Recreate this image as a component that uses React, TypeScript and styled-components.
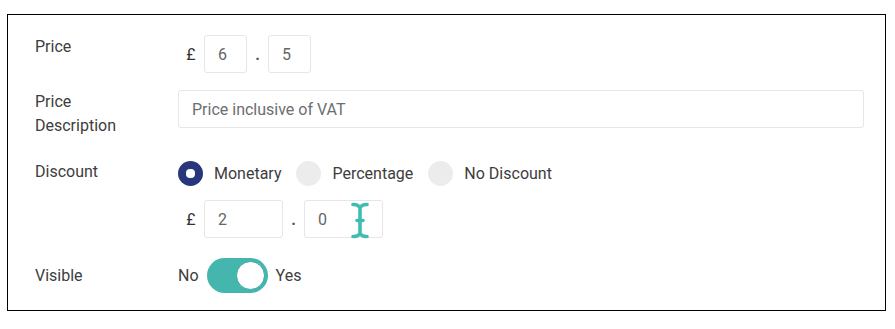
import React, { useState } from "react";
import styled, { createGlobalStyle } from "styled-components";

const GlobalStyle = createGlobalStyle`
  html, body {
    margin: 0;
    padding: 0;
    background: #ffffff;
  }
  body {
    font-family: Roboto, "Liberation Sans", Arial, sans-serif;
    color: #333333;
  }
`;

// Styled components
const Panel = styled.div`
  box-sizing: border-box;
  width: 879px;
  height: 297px;
  margin: 14px 0 0 7px;
  border: 1.5px solid #000;
  padding: 20px 22px 0 27px;
  display: flex;
  flex-direction: column;
`;

const Row = styled.div<{ $top?: number; $center?: boolean }>`
  display: grid;
  grid-template-columns: 143px 1fr;
  align-items: ${(p) => (p.$center ? "center" : "start")};
  margin-top: ${(p) => p.$top ?? 0}px;
`;

const Label = styled.div`
  font-size: 16px;
  line-height: 24px;
  color: #3d3d3d;
`;

const Controls = styled.div`
  display: flex;
  flex-direction: column;
  gap: 14px;
`;

const Inline = styled.div`
  display: flex;
  align-items: center;
`;

const Symbol = styled.span`
  font-size: 16px;
  color: #333;
  width: 26px;
  text-align: center;
`;

const Dot = styled.span`
  font-size: 16px;
  font-weight: 700;
  color: #555;
  width: 21px;
  text-align: center;
`;

const NumberBox = styled.div<{ $w: number }>`
  position: relative;
  box-sizing: border-box;
  width: ${(p) => p.$w}px;
  height: 38px;
  border: 1px solid #e6e6e6;
  border-radius: 3px;
  padding-left: 13px;
  display: flex;
  align-items: center;
  font-size: 16px;
  color: #666;
`;

const TextBox = styled.div`
  box-sizing: border-box;
  width: 686px;
  height: 38px;
  border: 1px solid #e6e6e6;
  border-radius: 3px;
  padding-left: 13px;
  display: flex;
  align-items: center;
  font-size: 16px;
  color: #6e6e6e;
`;

const RadioGroup = styled.div`
  display: flex;
  align-items: center;
  height: 26px;
`;

const RadioOption = styled.label`
  display: flex;
  align-items: center;
  gap: 11px;
  margin-right: 15px;
  font-size: 16px;
  color: #3d3d3d;
  cursor: pointer;
`;

const RadioCircle = styled.span<{ $on: boolean }>`
  width: 25px;
  height: 25px;
  border-radius: 50%;
  background: ${(p) => (p.$on ? "#27377a" : "#ececec")};
  display: flex;
  align-items: center;
  justify-content: center;
  &::after {
    content: "";
    display: ${(p) => (p.$on ? "block" : "none")};
    width: 9px;
    height: 9px;
    border-radius: 45%;
    background: #fff;
  }
`;

const Cursor = styled.svg`
  position: absolute;
  left: 46px;
  top: 1px;
`;

const ToggleRow = styled.div`
  display: flex;
  align-items: center;
  gap: 8px;
  font-size: 16px;
  color: #3d3d3d;
`;

const Track = styled.span<{ $on: boolean }>`
  box-sizing: border-box;
  width: 61px;
  height: 35px;
  border-radius: 18px;
  background: ${(p) => (p.$on ? "#45b6ae" : "#cccccc")};
  display: flex;
  align-items: center;
  justify-content: ${(p) => (p.$on ? "flex-end" : "flex-start")};
  padding: 0 3px;
  cursor: pointer;
`;

const Knob = styled.span`
  box-sizing: border-box;
  width: 29px;
  height: 29px;
  border-radius: 50%;
  background: #fff;
  border: 1px solid #3aa59d;
`;

const options = ["Monetary", "Percentage", "No Discount"];

export default function App() {
  const [discount, setDiscount] = useState("Monetary");
  const [visible, setVisible] = useState(true);

  return (
    <>
      <GlobalStyle />
      <Panel>
        <Row>
          <Label>Price</Label>
          <Inline>
            <Symbol>£</Symbol>
            <NumberBox $w={43}>6</NumberBox>
            <Dot>.</Dot>
            <NumberBox $w={43}>5</NumberBox>
          </Inline>
        </Row>

        <Row $top={17}>
          <Label>
            Price
            <br />
            Description
          </Label>
          <TextBox>Price inclusive of VAT</TextBox>
        </Row>

        <Row $top={22}>
          <Label>Discount</Label>
          <Controls>
            <RadioGroup>
              {options.map((o) => (
                <RadioOption key={o} onClick={() => setDiscount(o)}>
                  <RadioCircle $on={discount === o} />
                  {o}
                </RadioOption>
              ))}
            </RadioGroup>
            <Inline>
              <Symbol>£</Symbol>
              <NumberBox $w={79}>2</NumberBox>
              <Dot>.</Dot>
              <NumberBox $w={79}>
                0
                <Cursor width="18" height="37" viewBox="0 0 18 37">
                  <path
                    d="M2 2.5 Q6.5 2 9 5.5 Q11.5 2 16 2.5 M9 5.5 L9 31.5 M6 18.5 L12 18.5 M9 31.5 Q6.5 35 2 34.5 M9 31.5 Q11.5 35 16 34.5"
                    fill="none"
                    stroke="#3fbdb2"
                    strokeWidth="3.6"
                    strokeLinecap="round"
                  />
                </Cursor>
              </NumberBox>
            </Inline>
          </Controls>
        </Row>

        <Row $top={20} $center>
          <Label>Visible</Label>
          <ToggleRow>
            <span>No</span>
            <Track $on={visible} onClick={() => setVisible(!visible)}>
              <Knob />
            </Track>
            <span>Yes</span>
          </ToggleRow>
        </Row>
      </Panel>
    </>
  );
}
